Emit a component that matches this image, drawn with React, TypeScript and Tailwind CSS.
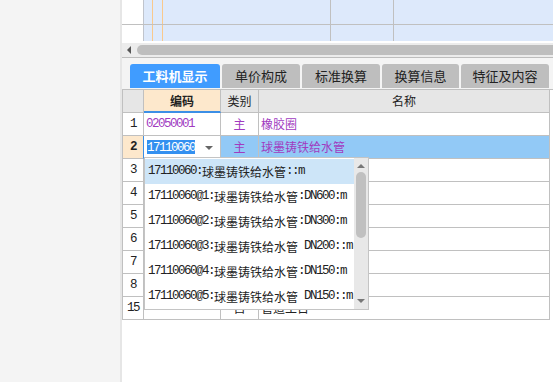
import type { ReactNode } from "react";

const purple = "text-[#a13bbf]";

const dropItems = [
  "17110060:球墨铸铁给水管::m",
  "17110060@1:球墨铸铁给水管:DN600:m",
  "17110060@2:球墨铸铁给水管:DN300:m",
  "17110060@3:球墨铸铁给水管 DN200::m",
  "17110060@4:球墨铸铁给水管:DN150:m",
  "17110060@5:球墨铸铁给水管 DN150::m",
];

// ASCII runs go in a narrow mono face so they take ~6px per char, like the bitmap font
function Mixed({ text }: { text: string }) {
  return (
    <>
      {text
        .split(/([\x20-\x7e]+)/)
        .filter(Boolean)
        .map((part, i) =>
          /^[\x20-\x7e]+$/.test(part) ? (
            <span key={i} className="font-['Liberation_Mono',monospace] text-[12.5px] tracking-[-1.5px]">
              {part}
            </span>
          ) : (
            <span key={i}>{part}</span>
          )
        )}
    </>
  );
}

function Cell({
  w,
  className = "",
  children,
}: {
  w: string;
  className?: string;
  children?: ReactNode;
}) {
  return (
    <div
      className={`flex h-[23px] shrink-0 items-center overflow-hidden whitespace-pre border-b border-r border-[#c0c0c0] ${w} ${className}`}
    >
      {children}
    </div>
  );
}

const tabs = [
  { label: "单价构成", w: "w-[78px]" },
  { label: "标准换算", w: "w-[78px]" },
  { label: "换算信息", w: "w-[77px]" },
  { label: "特征及内容", w: "w-[88px]" },
];

const emptyRows = ["3", "4", "5", "6", "7", "8"];

export default function App() {
  return (
    <div className="flex h-[382px] w-[553px] overflow-hidden bg-white font-['Noto_Sans_CJK_SC',sans-serif] text-[12px] text-[#222]">
      <div className="w-[122px] shrink-0 border-r-2 border-[#e6e6e6] bg-[#f4f4f4]" />

      <div className="relative flex w-[431px] flex-col">
        {/* upper grid, scrolled off */}
        <div className="flex h-[41px] flex-col">
          {["h-[25px] border-b border-[#c0c0c0]", "h-[16px]"].map((rowCls, i) => (
            <div key={i} className={`flex ${rowCls}`}>
              <div className="w-[22px] shrink-0 border-r border-[#c0c4cc] bg-white" />
              <div className="w-[9px] shrink-0 border-r border-[#f9c98c] bg-[#dde9fb]" />
              <div className="w-[10px] shrink-0 border-r border-[#f9c98c] bg-[#dde9fb]" />
              <div className="w-[168px] shrink-0 border-r border-[#c0c0c0] bg-[#dde9fb]" />
              <div className="w-[63px] shrink-0 border-r border-[#c0c0c0] bg-[#dde9fb]" />
              <div className="flex-1 bg-[#dde9fb]" />
            </div>
          ))}
        </div>

        {/* horizontal scrollbar */}
        <div className="mt-[2px] flex items-center bg-[#ececec] py-[2px]">
          <div className="ml-[5px] mr-[6px] h-0 w-0 border-y-[4px] border-r-[4px] border-y-transparent border-r-[#555]" />
          <div className="h-[10px] flex-1 rounded-l-full bg-[#bebebe]" />
        </div>
        <div className="h-px bg-[#bdbdbd]" />

        {/* tabs */}
        <div className="flex h-[31px] items-start gap-[2px] bg-[#f4f4f4] pl-[8px] pt-[6px]">
          <div className="flex h-[24px] w-[90px] items-center justify-center rounded-t-[3px] bg-[#409cff] text-[13px] font-bold text-white">
            工料机显示
          </div>
          {tabs.map((t) => (
            <div
              key={t.label}
              className={`flex h-[24px] items-center justify-center rounded-t-[3px] bg-[#bebebe] text-[13px] ${t.w}`}
            >
              {t.label}
            </div>
          ))}
        </div>

        {/* lower grid */}
        <div className="flex flex-col border-t border-[#c0c0c0]">
          <div className="flex">
            <Cell w="w-[22px]" className="border-l bg-[#e6e6e6]" />
            <Cell w="w-[77px]" className="justify-center border-b-2 border-b-[#3c8fe6] bg-[#fde8cc] font-bold">
              编码
            </Cell>
            <Cell w="w-[38px]" className="justify-center bg-[#e6e6e6]">
              类别
            </Cell>
            <Cell w="w-[291px]" className="justify-center bg-[#e6e6e6]">
              名称
            </Cell>
          </div>

          <div className={`flex ${purple}`}>
            <Cell w="w-[22px]" className="justify-center border-l text-[#222]">
              <Mixed text="1" />
            </Cell>
            <Cell w="w-[77px]" className="pl-[2px]">
              <Mixed text="02050001" />
            </Cell>
            <Cell w="w-[38px]" className="justify-center">
              主
            </Cell>
            <Cell w="w-[291px]" className="pl-[2px]">
              橡胶圈
            </Cell>
          </div>

          <div className={`flex ${purple}`}>
            <Cell w="w-[22px]" className="justify-center border-l border-r-[#3c8fe6] bg-[#fde8cc] font-bold text-[#222]">
              <Mixed text="2" />
            </Cell>
            <Cell w="w-[77px]" className="bg-white pl-[3px]">
              <span className="bg-[#3390f0] leading-[11px] text-white">
                <Mixed text="17110060" />
              </span>
              <span className="ml-[10px] mt-[1px] h-0 w-0 border-x-[4px] border-t-[4px] border-x-transparent border-t-[#666]" />
            </Cell>
            <Cell w="w-[38px]" className="justify-center bg-[#92c9f6]">
              主
            </Cell>
            <Cell w="w-[291px]" className="bg-[#92c9f6] pl-[2px]">
              球墨铸铁给水管
            </Cell>
          </div>

          {emptyRows.map((n) => (
            <div key={n} className="flex">
              <Cell w="w-[22px]" className="justify-center border-l">
                <Mixed text={n} />
              </Cell>
              <Cell w="w-[77px]" />
              <Cell w="w-[38px]" />
              <Cell w="w-[291px]" />
            </div>
          ))}

          <div className="flex">
            <Cell w="w-[22px]" className="justify-center border-l">
              <Mixed text="15" />
            </Cell>
            <Cell w="w-[77px]" />
            <Cell w="w-[38px]" className="justify-center">
              自
            </Cell>
            <Cell w="w-[291px]" className="pl-[2px]">
              管道工日
            </Cell>
          </div>
        </div>

        {/* code dropdown */}
        <div className="absolute left-[22px] top-[157px] z-10 flex h-[153px] w-[225px] border border-[#c4c4c4] bg-white">
          <div className="flex flex-1 flex-col pt-[1px]">
            {dropItems.map((item, i) => (
              <div
                key={item}
                className={`flex h-[25px] items-center whitespace-pre pl-[3px] ${i === 0 ? "bg-[#cde5f8]" : ""}`}
              >
                <Mixed text={item} />
              </div>
            ))}
          </div>
          <div className="flex w-[14px] flex-col items-center bg-[#e8e8e8] pt-[6px] pb-[6px]">
            <div className="h-0 w-0 border-x-[4px] border-b-[4px] border-x-transparent border-b-[#777]" />
            <div className="mt-[4px] h-[66px] w-[10px] rounded-full bg-[#c0c0c0]" />
            <div className="flex-1" />
            <div className="h-0 w-0 border-x-[4px] border-t-[4px] border-x-transparent border-t-[#777]" />
          </div>
        </div>
      </div>
    </div>
  );
}
